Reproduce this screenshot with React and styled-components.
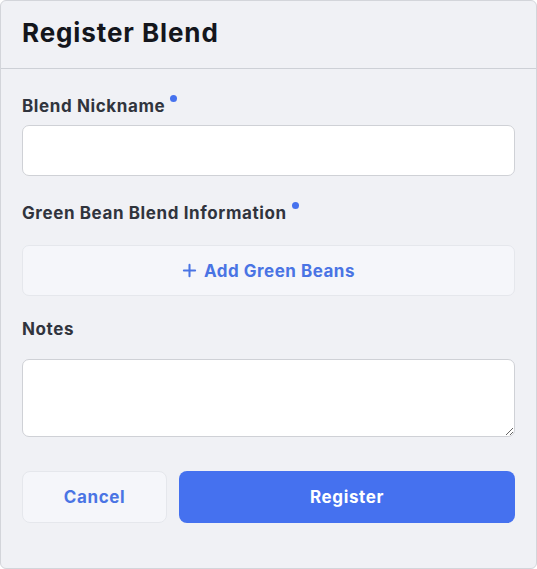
import React, { useState } from 'react';
import styled, { createGlobalStyle } from 'styled-components';

const GlobalStyle = createGlobalStyle`
  html, body {
    margin: 0;
    padding: 0;
    background: #ffffff;
  }
  * {
    box-sizing: border-box;
  }
`;

const App = () => {
  const [nickname, setNickname] = useState('');
  const [notes, setNotes] = useState('');

  return (
    <>
      <GlobalStyle />
      <Panel>
        <Header>
          <Title>Register Blend</Title>
        </Header>

        <Body>
          <Field>
            <Label required>Blend Nickname</Label>
            <Input value={nickname} onChange={(e) => setNickname(e.target.value)} />
          </Field>

          <Field top={27} gap={22}>
            <Label required>Green Bean Blend Information</Label>
            <AddButton type="button">
              <PlusIcon viewBox="0 0 16 16">
                <path d="M8 2v12M2 8h12" />
              </PlusIcon>
              Add Green Beans
            </AddButton>
          </Field>

          <Field top={23} gap={20}>
            <Label>Notes</Label>
            <TextArea value={notes} onChange={(e) => setNotes(e.target.value)} />
          </Field>

          <Actions>
            <CancelButton type="button">Cancel</CancelButton>
            <SubmitButton type="button">Register</SubmitButton>
          </Actions>
        </Body>
      </Panel>
    </>
  );
};

export default App;

const Panel = styled.div`
  width: 537px;
  height: 569px;
  background: #f0f1f5;
  border: 1px solid #d3d5da;
  border-radius: 6px;
  font-family: Inter, 'Noto Sans', sans-serif;
  display: flex;
  flex-direction: column;
  overflow: hidden;
`;

const Header = styled.div`
  height: 68px;
  padding: 0 21px;
  display: flex;
  align-items: center;
  border-bottom: 1px solid #cdd0d6;
`;

const Title = styled.h1`
  margin: 0 0 4px;
  font-size: 26px;
  font-weight: 700;
  letter-spacing: 0.9px;
  color: #14161c;
`;

const Body = styled.div`
  padding: 27px 21px 0;
  display: flex;
  flex-direction: column;
`;

const Field = styled.div`
  margin-top: ${(p) => p.top || 0}px;
  display: flex;
  flex-direction: column;
  gap: ${(p) => p.gap || 9}px;
`;

const Label = styled.label`
  position: relative;
  align-self: flex-start;
  font-size: 17px;
  line-height: 20px;
  font-weight: 700;
  letter-spacing: 0.6px;
  color: #30343d;

  &::after {
    content: '';
    display: ${(p) => (p.required ? 'block' : 'none')};
    position: absolute;
    right: -12px;
    top: -1px;
    width: 7px;
    height: 7px;
    border-radius: 50%;
    background: #4672ee;
  }
`;

const boxBase = `
  width: 100%;
  border: 1px solid #cfd1d6;
  border-radius: 7px;
  background: #ffffff;
  font-family: Inter, 'Noto Sans', sans-serif;
  font-size: 15px;
  outline: none;
`;

const Input = styled.input`
  ${boxBase}
  height: 51px;
  padding: 0 14px;
`;

const TextArea = styled.textarea`
  ${boxBase}
  display: block;
  height: 78px;
  padding: 12px 14px;
  resize: vertical;
`;

const AddButton = styled.button`
  width: 100%;
  height: 51px;
  display: flex;
  align-items: center;
  justify-content: center;
  gap: 7px;
  border: 1px solid #e5e7ec;
  border-radius: 7px;
  background: #f5f6fa;
  color: #4a74e4;
  font-family: Inter, 'Noto Sans', sans-serif;
  font-size: 17px;
  font-weight: 700;
  letter-spacing: 0.5px;
  cursor: pointer;
`;

const PlusIcon = styled.svg`
  width: 15px;
  height: 15px;
  fill: none;
  stroke: currentColor;
  stroke-width: 2.2;
  stroke-linecap: round;
`;

const Actions = styled.div`
  margin-top: 34px;
  display: grid;
  grid-template-columns: 145px 1fr;
  gap: 12px;
`;

const ButtonBase = styled.button`
  height: 52px;
  border-radius: 8px;
  font-family: Inter, 'Noto Sans', sans-serif;
  font-size: 17px;
  font-weight: 700;
  letter-spacing: 0.6px;
  cursor: pointer;
`;

const CancelButton = styled(ButtonBase)`
  border: 1px solid #e5e7ec;
  background: #f5f6fa;
  color: #4a74e4;
`;

const SubmitButton = styled(ButtonBase)`
  border: none;
  background: #4571ef;
  color: #ffffff;
`;
